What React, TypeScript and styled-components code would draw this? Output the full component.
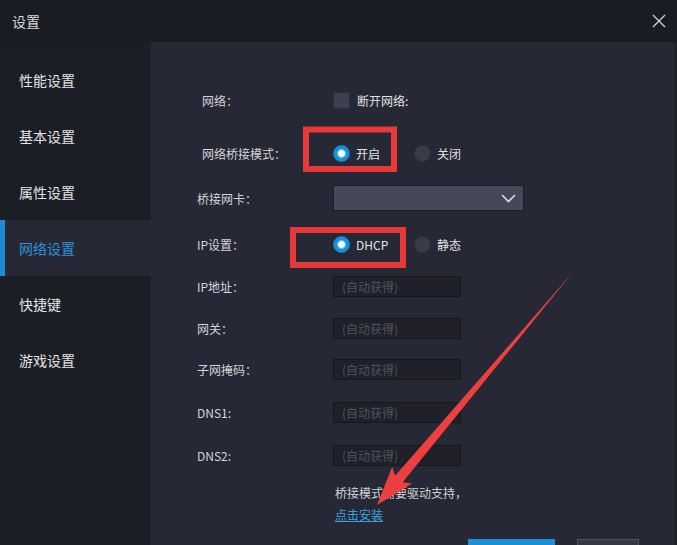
import React from 'react';
import styled, { createGlobalStyle } from 'styled-components';

const GlobalStyle = createGlobalStyle`
  html, body {
    margin: 0;
    padding: 0;
    background: #1a1c23;
  }
  body {
    font-family: "Noto Sans CJK SC", "Noto Sans", sans-serif;
  }
`;

const navItems = ['性能设置', '基本设置', '属性设置', '网络设置', '快捷键', '游戏设置'];

const ipRows: { label: string; mt: number }[] = [
  { label: 'IP地址：', mt: 12 },
  { label: '网关：', mt: 12 },
  { label: '子网掩码：', mt: 11 },
  { label: 'DNS1:', mt: 13 },
  { label: 'DNS2:', mt: 13 },
];

export default function App() {
  return (
    <>
      <GlobalStyle />
      <Window>
        <TitleBar>
          <Title>设置</Title>
          <CloseButton>
            <svg width="14" height="14" viewBox="0 0 14 14">
              <path d="M1 1 L13 13 M13 1 L1 13" stroke="#d4d4d4" strokeWidth="1.3" fill="none" />
            </svg>
          </CloseButton>
        </TitleBar>
        <Body>
          <Sidebar>
            {navItems.map((item) => (
              <NavItem key={item} $active={item === '网络设置'}>
                {item}
              </NavItem>
            ))}
          </Sidebar>
          <Content>
            <Row $mt={0}>
              <Label $indent={5}>网络：</Label>
              <Checkbox />
              <OptionText>断开网络:</OptionText>
            </Row>
            <Row $mt={23}>
              <Label $indent={5}>网络桥接模式：</Label>
              <RadioGroup>
                <Radio $checked />
                <OptionText>开启</OptionText>
              </RadioGroup>
              <RadioGroup>
                <Radio />
                <OptionText>关闭</OptionText>
              </RadioGroup>
            </Row>
            <Row $mt={15}>
              <Label>桥接网卡：</Label>
              <Select>
                <svg width="15" height="9" viewBox="0 0 15 9">
                  <path d="M1 1 L7.5 7.5 L14 1" stroke="#d6dae2" strokeWidth="1.6" fill="none" />
                </svg>
              </Select>
            </Row>
            <Row $mt={16}>
              <Label>IP设置：</Label>
              <RadioGroup>
                <Radio $checked />
                <OptionText>DHCP</OptionText>
              </RadioGroup>
              <RadioGroup>
                <Radio />
                <OptionText>静态</OptionText>
              </RadioGroup>
            </Row>
            {ipRows.map((r) => (
              <Row key={r.label} $mt={r.mt}>
                <Label>{r.label}</Label>
                <Input>(自动获得)</Input>
              </Row>
            ))}
            <Note>桥接模式需要驱动支持，</Note>
            <InstallLink>点击安装</InstallLink>
            <Buttons>
              <PrimaryButton />
              <SecondaryButton />
            </Buttons>
          </Content>
        </Body>
        <Markup width="677" height="545" viewBox="0 0 677 545">
          <rect x="306" y="129.5" width="88" height="39.5" fill="none" stroke="#e8393a" strokeWidth="6" />
          <rect x="293" y="230" width="110" height="35" fill="none" stroke="#e8393a" strokeWidth="6" />
          <polygon
            points="573,272 402.7,482.2 412,483.6 377,505 392.2,466.8 395.1,475.8"
            fill="#ec3f3f"
          />
        </Markup>
      </Window>
    </>
  );
}

const Window = styled.div`
  position: relative;
  width: 677px;
  height: 545px;
  display: flex;
  flex-direction: column;
  overflow: hidden;
  background: #1a1c23;
`;

const TitleBar = styled.div`
  height: 42px;
  flex: none;
  display: flex;
  align-items: center;
  justify-content: space-between;
  padding: 0 11px 0 12px;
  background: #1a1c23;
`;

const Title = styled.div`
  font-size: 14px;
  color: #d8d8d8;
`;

const CloseButton = styled.div`
  width: 14px;
  height: 14px;
  display: flex;
  margin-top: -1px;
`;

const Body = styled.div`
  flex: 1;
  min-height: 0;
  display: flex;
`;

const Sidebar = styled.nav`
  width: 151px;
  flex: none;
  padding-top: 10px;
  background: #1c1e26;
`;

const NavItem = styled.div<{ $active?: boolean }>`
  height: 56px;
  display: flex;
  align-items: center;
  padding-left: 19px;
  font-size: 14px;
  color: ${({ $active }) => ($active ? '#2b93d6' : '#e4e4e4')};
  background: ${({ $active }) => ($active ? '#262836' : 'transparent')};
  box-shadow: ${({ $active }) => ($active ? 'inset 5px 0 0 #1f8bd0' : 'none')};
`;

const Content = styled.main`
  flex: 1;
  display: flex;
  flex-direction: column;
  padding: 43px 0 0 46px;
  background: #262836;
  border-right: 3px solid #20222b;
`;

const Row = styled.div<{ $mt: number }>`
  height: 30px;
  flex: none;
  display: flex;
  align-items: center;
  margin-top: ${({ $mt }) => $mt}px;
`;

const Label = styled.div<{ $indent?: number }>`
  width: 136px;
  flex: none;
  box-sizing: border-box;
  padding-left: ${({ $indent }) => $indent ?? 0}px;
  font-size: 12px;
  color: #d4d4d4;
`;

const OptionText = styled.span`
  font-size: 12px;
  color: #e2e2e2;
`;

const Checkbox = styled.div`
  width: 15px;
  height: 15px;
  margin-right: 7px;
  background: #3c3f4e;
  border: 1px solid #2c2e39;
`;

const RadioGroup = styled.div`
  display: flex;
  align-items: center;
  gap: 6px;
  width: 81px;
`;

const Radio = styled.div<{ $checked?: boolean }>`
  width: 17px;
  height: 17px;
  box-sizing: border-box;
  border-radius: 50%;
  background: ${({ $checked }) =>
    $checked ? 'radial-gradient(circle, #effbff 0 3px, #8fd6f6 3.5px, #1a8ed8 5px)' : '#393b47'};
  border: 1px solid ${({ $checked }) => ($checked ? '#1783c8' : '#2e303a')};
`;

const Select = styled.div`
  width: 191px;
  height: 26px;
  box-sizing: border-box;
  display: flex;
  align-items: center;
  justify-content: flex-end;
  padding-right: 7px;
  background: #454858;
  border: 1px solid #1b1d25;
`;

const Input = styled.div`
  width: 128px;
  height: 21px;
  box-sizing: border-box;
  display: flex;
  align-items: center;
  padding-left: 8px;
  font-size: 12px;
  color: #4f5262;
  background: #1f2029;
  border: 1px solid #16171d;
`;

const Note = styled.div`
  margin: 14px 0 0 138px;
  height: 18px;
  font-size: 12px;
  color: #d2d2d2;
`;

const InstallLink = styled.a`
  margin: 5px 0 0 138px;
  height: 18px;
  font-size: 12px;
  color: #3ba4de;
  text-decoration: underline;
  cursor: pointer;
  align-self: flex-start;
`;

const Buttons = styled.div`
  display: flex;
  gap: 22px;
  margin: 16px 0 0 271px;
`;

const PrimaryButton = styled.div`
  width: 87px;
  height: 30px;
  background: #1e8fd6;
`;

const SecondaryButton = styled.div`
  width: 62px;
  height: 30px;
  box-sizing: border-box;
  background: #363845;
  border: 1px solid #50525e;
`;

const Markup = styled.svg`
  position: absolute;
  left: 0;
  top: 0;
  pointer-events: none;
`;
